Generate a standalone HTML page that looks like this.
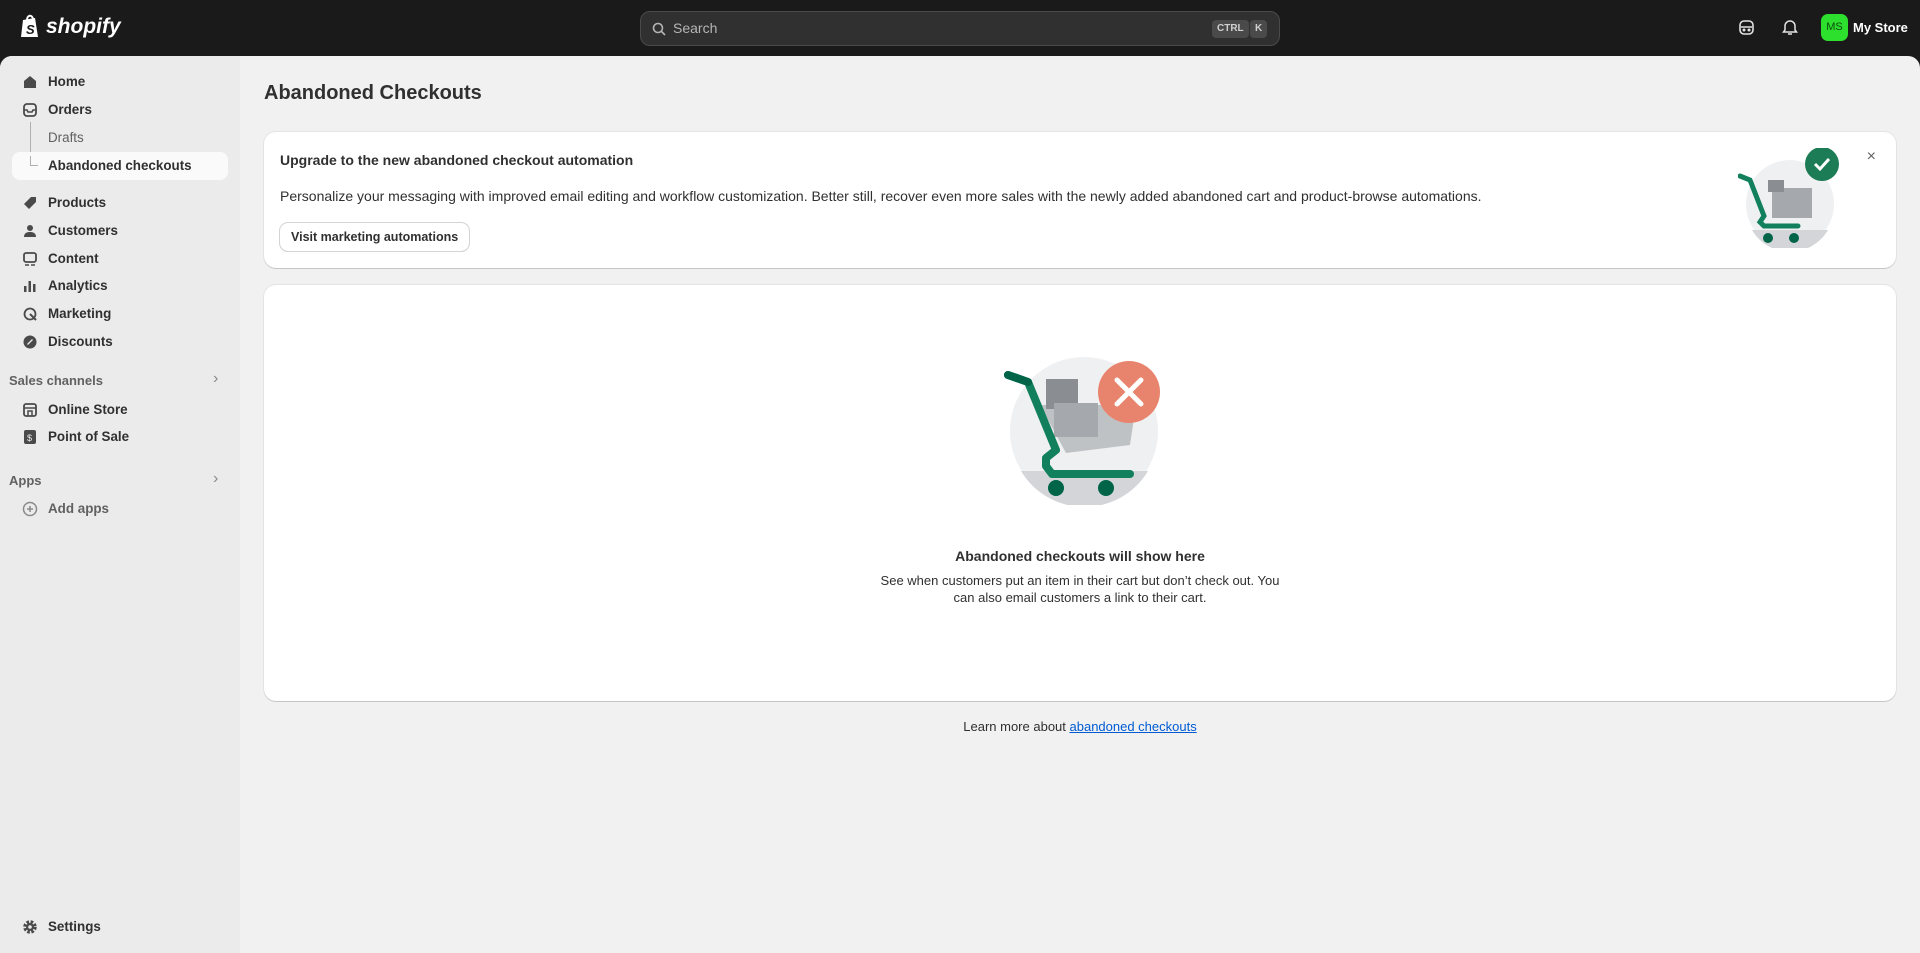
<!DOCTYPE html>
<html><head><meta charset="utf-8"><style>
*{box-sizing:border-box;margin:0;padding:0}
body{width:1920px;height:953px;background:#1a1a1a;font-family:"Liberation Sans",sans-serif;color:#303030;overflow:hidden;position:relative}
.top{position:absolute;left:0;top:0;width:1920px;height:56px;background:#1a1a1a}
.logo{position:absolute;left:20px;top:14px;color:#fff;font-weight:bold;font-style:italic;font-size:21px;display:flex;align-items:center;gap:4px}
.search{position:absolute;left:640px;top:11px;width:640px;height:35px;background:#303030;border:1px solid #4a4a4a;border-radius:10px;color:#b5b5b5;font-size:14px;padding:0 0 0 32px;line-height:33px}
.kbd{position:absolute;top:8px;height:18px;background:#4a4a4a;border-radius:4px;color:#cfcfcf;font-size:10px;line-height:18px;padding:0 5px;font-weight:bold}
.frame{position:absolute;left:0;top:56px;width:1920px;height:897px;background:#f1f1f1;border-radius:12px 12px 0 0;overflow:hidden}
.side{position:absolute;left:0;top:0;width:240px;height:897px;background:#ebebeb}
.it{position:absolute;left:48px;font-size:13.4px;font-weight:bold;color:#303030}
.ic{position:absolute;left:22px;width:16px;height:16px}
.sec{position:absolute;left:9px;font-size:13px;font-weight:bold;color:#616161}
.card{position:absolute;background:#fff;border-radius:12px;box-shadow:0 1px 0 rgba(0,0,0,.13),0 0 0 1px rgba(0,0,0,.05)}
</style></head><body>
<div class="top">
 <div class="logo"><svg width="22" height="25" viewBox="0 0 22 25"><path d="M3 6 L15 4 L18 23 L1 23Z" fill="#fff"/><path d="M7 6 C7 1 12 0 13 5" stroke="#fff" stroke-width="2" fill="none"/><text x="6" y="20" font-size="13" font-weight="bold" fill="#1a1a1a" font-family="Liberation Sans">S</text></svg>shopify</div>
 <div class="search"><svg style="position:absolute;left:11px;top:10px" width="14" height="14" viewBox="0 0 14 14"><circle cx="6" cy="6" r="4.5" stroke="#b5b5b5" stroke-width="1.6" fill="none"/><path d="M9.5 9.5L13 13" stroke="#b5b5b5" stroke-width="1.6"/></svg>Search
  <span class="kbd" style="left:571px">CTRL</span><span class="kbd" style="left:609px">K</span></div>
 <svg style="position:absolute;left:1738px;top:19px" width="17" height="17" viewBox="0 0 17 17"><rect x="2" y="2" width="13" height="13" rx="4" stroke="#e3e3e3" stroke-width="1.6" fill="none"/><path d="M3 8h11" stroke="#e3e3e3" stroke-width="1.5"/><circle cx="6" cy="11" r="1.5" fill="#e3e3e3"/><circle cx="11" cy="11" r="1.5" fill="#e3e3e3"/></svg>
 <svg style="position:absolute;left:1782px;top:18px" width="16" height="18" viewBox="0 0 16 18"><path d="M3 12V8a5 5 0 0110 0v4l1.5 2h-13z" stroke="#e3e3e3" stroke-width="1.5" fill="none"/><path d="M6 16h4" stroke="#e3e3e3" stroke-width="1.5"/></svg>
 <div style="position:absolute;left:1821px;top:14px;width:27px;height:27px;border-radius:7px;background:#2ee02e;color:#0b4d0b;font-size:11px;text-align:center;line-height:27px">MS</div>
 <div style="position:absolute;left:1853px;top:20px;color:#fff;font-size:13px;font-weight:bold">My Store</div>
</div>
<div class="frame">
 <div class="side">
  <svg class="ic" style="top:18px" viewBox="0 0 16 16"><path d="M2 7L8 2l6 5v7H2z" fill="#4a4a4a"/></svg><div class="it" style="top:18px">Home</div>
  <svg class="ic" style="top:46px" viewBox="0 0 16 16"><rect x="2" y="2" width="12" height="12" rx="3" stroke="#4a4a4a" stroke-width="1.8" fill="none"/><path d="M2 8h3l1 2h4l1-2h3" stroke="#4a4a4a" stroke-width="1.6" fill="none"/></svg><div class="it" style="top:46px">Orders</div>
  <div style="position:absolute;left:30px;top:66px;width:1px;height:40px;background:#b0b0b0"></div>
  <div class="it" style="top:74px;color:#616161;font-weight:normal">Drafts</div>
  <div style="position:absolute;left:12px;top:96px;width:216px;height:28px;background:#fafafa;border-radius:8px"></div>
  <div style="position:absolute;left:30px;top:100px;width:8px;height:10px;border-left:1px solid #b0b0b0;border-bottom:1px solid #b0b0b0"></div>
  <div class="it" style="top:102px">Abandoned checkouts</div>
  <svg class="ic" style="top:139px" viewBox="0 0 16 16"><path d="M9 2h5v5l-7 7-5-5z" fill="#4a4a4a"/></svg><div class="it" style="top:139px">Products</div>
  <svg class="ic" style="top:167px" viewBox="0 0 16 16"><circle cx="8" cy="5" r="3" fill="#4a4a4a"/><path d="M2 14c0-4 3-5 6-5s6 1 6 5z" fill="#4a4a4a"/></svg><div class="it" style="top:167px">Customers</div>
  <svg class="ic" style="top:195px" viewBox="0 0 16 16"><rect x="2" y="2" width="12" height="9" rx="2" stroke="#4a4a4a" stroke-width="1.8" fill="none"/><path d="M3 14h4M9 14h4" stroke="#4a4a4a" stroke-width="1.6"/></svg><div class="it" style="top:195px">Content</div>
  <svg class="ic" style="top:222px" viewBox="0 0 16 16"><rect x="2" y="8" width="2.5" height="6" fill="#4a4a4a"/><rect x="6.5" y="3" width="2.5" height="11" fill="#4a4a4a"/><rect x="11" y="6" width="2.5" height="8" fill="#4a4a4a"/></svg><div class="it" style="top:222px">Analytics</div>
  <svg class="ic" style="top:250px" viewBox="0 0 16 16"><circle cx="8" cy="8" r="5.5" stroke="#4a4a4a" stroke-width="1.8" fill="none"/><path d="M8 8l6 6" stroke="#4a4a4a" stroke-width="2"/></svg><div class="it" style="top:250px">Marketing</div>
  <svg class="ic" style="top:278px" viewBox="0 0 16 16"><circle cx="8" cy="8" r="6.5" fill="#4a4a4a"/><path d="M5.5 10.5l5-5" stroke="#ebebeb" stroke-width="1.3"/></svg><div class="it" style="top:278px">Discounts</div>
  <div class="sec" style="top:317px">Sales channels</div><div style="position:absolute;left:213px;top:314px;color:#8a8a8a;font-size:16px">›</div>
  <svg class="ic" style="top:346px" viewBox="0 0 16 16"><rect x="2" y="2" width="12" height="12" rx="2" stroke="#4a4a4a" stroke-width="1.8" fill="none"/><path d="M2 6h12M6 14V9h4v5" stroke="#4a4a4a" stroke-width="1.5" fill="none"/></svg><div class="it" style="top:346px">Online Store</div>
  <svg class="ic" style="top:373px" viewBox="0 0 16 16"><rect x="2" y="1" width="12" height="14" rx="2" fill="#4a4a4a"/><text x="5" y="12" font-size="9" fill="#ebebeb" font-family="Liberation Sans">$</text></svg><div class="it" style="top:373px">Point of Sale</div>
  <div class="sec" style="top:417px">Apps</div><div style="position:absolute;left:213px;top:414px;color:#8a8a8a;font-size:16px">›</div>
  <svg class="ic" style="top:445px" viewBox="0 0 16 16"><circle cx="8" cy="8" r="6.5" stroke="#8a8a8a" stroke-width="1.5" fill="none"/><path d="M8 5v6M5 8h6" stroke="#8a8a8a" stroke-width="1.5"/></svg><div class="it" style="top:445px;color:#616161">Add apps</div>
  <svg class="ic" style="top:863px" viewBox="0 0 16 16"><circle cx="8" cy="8" r="5" stroke="#4a4a4a" stroke-width="3.5" stroke-dasharray="2.5 1.5" fill="none"/><circle cx="8" cy="8" r="4" fill="#4a4a4a"/><circle cx="8" cy="8" r="1.8" fill="#ebebeb"/></svg><div class="it" style="top:863px">Settings</div>
 </div>
 <div style="position:absolute;left:264px;top:26px;font-size:20px;font-weight:bold;color:#303030">Abandoned Checkouts</div>
 <div class="card" style="left:264px;top:76px;width:1632px;height:136px">
  <div style="position:absolute;left:16px;top:20px;font-size:14px;font-weight:bold">Upgrade to the new abandoned checkout automation</div>
  <div style="position:absolute;left:16px;top:56px;font-size:14px">Personalize your messaging with improved email editing and workflow customization. Better still, recover even more sales with the newly added abandoned cart and product-browse automations.</div>
  <div style="position:absolute;left:16px;top:91px;height:28px;padding:0 11px;border-radius:8px;box-shadow:0 0 0 1px #d4d4d4,0 1px 0 #b5b5b5;font-size:12.5px;font-weight:bold;line-height:28px">Visit marketing automations</div>
  <svg style="position:absolute;left:1474px;top:16px" width="104" height="100" viewBox="0 0 104 100"><circle cx="52" cy="56" r="44" fill="#eff0f1"/><path d="M14 82a44 44 0 0 0 76 0z" fill="#d3d5d8"/><rect x="34" y="40" width="40" height="30" fill="#a5a8ac"/><rect x="30" y="32" width="16" height="12" fill="#8a8d91"/><path d="M2 28l10 4 14 36-4 6 4 4h34" stroke="#12805c" stroke-width="5" fill="none" stroke-linecap="round"/><circle cx="30" cy="90" r="5" fill="#006448"/><circle cx="56" cy="90" r="5" fill="#006448"/><circle cx="84" cy="16" r="17" fill="#1c7c56"/><path d="M77 16l5 5 9-10" stroke="#fff" stroke-width="3" fill="none"/></svg>
  <div style="position:absolute;right:20px;top:16px;color:#616161;font-size:16px">×</div>
 </div>
 <div class="card" style="left:264px;top:229px;width:1632px;height:416px">
  <svg style="position:absolute;left:736px;top:70px" width="172" height="150" viewBox="0 0 172 150"><circle cx="84" cy="76" r="74" fill="#eff0f1"/><path d="M21 116a74 74 0 0 0 127 0z" fill="#d3d5d8"/><path d="M40 50h96l-6 40-64 8z" fill="#bfc2c5"/><rect x="46" y="24" width="32" height="30" fill="#8a8d91"/><rect x="54" y="48" width="44" height="34" fill="#a5a8ac"/><path d="M8 20l20 7 28 68-10 8v8l6 8h78" stroke="#12805c" stroke-width="8" fill="none" stroke-linecap="round" stroke-linejoin="round"/><path d="M8 20l20 7" stroke="#006448" stroke-width="8" stroke-linecap="round"/><circle cx="56" cy="133" r="8" fill="#006448"/><circle cx="106" cy="133" r="8" fill="#006448"/><circle cx="129" cy="37" r="31" fill="#e8846e"/><path d="M117 25l24 24M141 25l-24 24" stroke="#fff" stroke-width="5" stroke-linecap="round"/></svg>
  <div style="position:absolute;left:0;width:100%;top:263px;text-align:center;font-size:14px;font-weight:bold">Abandoned checkouts will show here</div>
  <div style="position:absolute;left:612px;width:408px;top:287px;text-align:center;font-size:13px;line-height:17px">See when customers put an item in their cart but don’t check out. You can also email customers a link to their cart.</div>
 </div>
 <div style="position:absolute;left:264px;width:1632px;top:663px;text-align:center;font-size:13px">Learn more about <span style="color:#005bd3;text-decoration:underline">abandoned checkouts</span></div>
</div>
</body></html>
